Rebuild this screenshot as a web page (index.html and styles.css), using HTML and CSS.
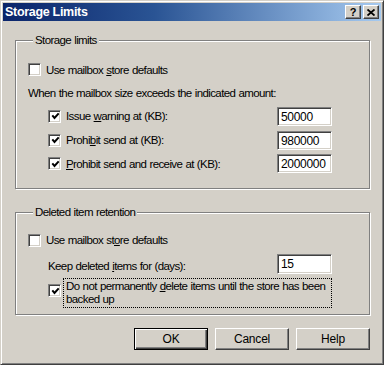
FILE: index.html
```html
<!DOCTYPE html>
<html>
<head>
<meta charset="utf-8">
<link rel="stylesheet" href="styles.css">
</head>
<body>
<div class="window">
  <div class="titlebar">
    <span class="title">Storage Limits</span>
    <div class="tbuttons">
      <span class="tbtn help">?</span>
      <span class="tbtn close"><svg width="8" height="7" viewBox="0 0 8 7"><path d="M0.5 0.5 L7.5 6.5 M7.5 0.5 L0.5 6.5" stroke="#000" stroke-width="1.8" fill="none"/></svg></span>
    </div>
  </div>
  <div class="body">
    <fieldset class="group g1">
      <legend>Storage limits</legend>
      <div class="row r-defaults">
        <span class="cb"></span>
        <span class="lbl">Use mailbox <u>s</u>tore defaults</span>
      </div>
      <div class="row r-when">
        <span class="lbl">When the mailbox size exceeds the indicated amount:</span>
      </div>
      <div class="row r-field">
        <span class="cb checked"><svg width="9" height="9" viewBox="0 0 9 9"><path d="M1.3 3.4 L3.5 5.9 L7.7 1.4" stroke="#000" stroke-width="2" fill="none"/></svg></span>
        <span class="lbl grow">Issue <u>w</u>arning at (KB):</span>
        <span class="input">50000</span>
      </div>
      <div class="row r-field">
        <span class="cb checked"><svg width="9" height="9" viewBox="0 0 9 9"><path d="M1.3 3.4 L3.5 5.9 L7.7 1.4" stroke="#000" stroke-width="2" fill="none"/></svg></span>
        <span class="lbl grow">Prohi<u>b</u>it send at (KB):</span>
        <span class="input">980000</span>
      </div>
      <div class="row r-field">
        <span class="cb checked"><svg width="9" height="9" viewBox="0 0 9 9"><path d="M1.3 3.4 L3.5 5.9 L7.7 1.4" stroke="#000" stroke-width="2" fill="none"/></svg></span>
        <span class="lbl grow"><u>P</u>rohibit send and receive at (KB):</span>
        <span class="input">2000000</span>
      </div>
    </fieldset>
    <fieldset class="group g2">
      <legend>Deleted item retention</legend>
      <div class="row r-defaults2">
        <span class="cb"></span>
        <span class="lbl">Use mailbox st<u>o</u>re defaults</span>
      </div>
      <div class="row r-keep">
        <span class="lbl grow">Keep deleted <u>i</u>tems for (days):</span>
        <span class="input">15</span>
      </div>
      <div class="row r-donot">
        <span class="cb checked"><svg width="9" height="9" viewBox="0 0 9 9"><path d="M1.3 3.4 L3.5 5.9 L7.7 1.4" stroke="#000" stroke-width="2" fill="none"/></svg></span>
        <span class="focus">Do not permanently <u>d</u>elete items until the store has been<br>backed up</span>
      </div>
    </fieldset>
    <div class="buttons">
      <span class="btn default">OK</span>
      <span class="btn">Cancel</span>
      <span class="btn">Help</span>
    </div>
  </div>
</div>
</body>
</html>
```
FILE: styles.css
```css
* { box-sizing: border-box; }
html, body { margin: 0; padding: 0; }
body {
  background: #d4d0c8;
  font-family: "Liberation Sans", Arial, sans-serif;
  font-size: 11.5px;
  letter-spacing: -0.6px;
  word-spacing: 0.5px;
  color: #000;
}
.window {
  width: 384px;
  height: 365px;
  border: 1px solid;
  border-color: #d4d0c8 #404040 #404040 #d4d0c8;
  box-shadow: inset 1px 1px #fff, inset -1px -1px #808080;
  padding: 2px;
  background: #d4d0c8;
}
.titlebar {
  height: 18px;
  background: linear-gradient(to right, #0a246a 0%, #2a5494 40%, #a6caf0 100%);
  display: flex;
  align-items: center;
  justify-content: space-between;
  padding: 0 2px 0 2px;
}
.title {
  color: #fff;
  font-weight: bold;
  font-size: 12.5px;
  letter-spacing: -0.3px;
  word-spacing: 0;
}
.tbuttons { display: flex; gap: 2px; }
.tbtn {
  width: 16px;
  height: 14px;
  background: #d4d0c8;
  border: 1px solid;
  border-color: #fff #404040 #404040 #fff;
  box-shadow: inset -1px -1px #808080;
  display: flex;
  align-items: center;
  justify-content: center;
  font-weight: bold;
  font-size: 11px;
  letter-spacing: 0;
  line-height: 12px;
}
.body {
  padding: 12px 11px 0 12px;
}
.group {
  margin: 0;
  border: 1px solid #808080;
  box-shadow: inset 1px 1px #fff, 1px 1px #fff;
  padding: 0 37px 0 12px;
  min-width: 0;
}
.group legend {
  padding: 0 2px;
  margin-left: 5px;
  line-height: 14px;
  background: #d4d0c8;
}
.g1 { padding-top: 10px; padding-bottom: 13px; }
.g2 { margin-top: 16px; padding-top: 9px; padding-bottom: 6px; }
.row {
  display: flex;
  align-items: center;
}
.r-defaults { height: 24px; padding-top: 1px; }
.r-when { height: 23px; }
.r-field { height: 24px; padding-left: 20px; }
.r-field:last-child { height: 23px; }
.r-defaults2 { height: 24px; }
.r-keep { height: 24px; padding-left: 20px; }
.r-keep .lbl { padding-top: 4px; }
.r-donot { align-items: flex-start; padding-left: 20px; margin-top: 2px; }
.grow { flex: 1; }
.cb {
  width: 13px;
  height: 13px;
  flex: none;
  background: #fff;
  border: 1px solid;
  border-color: #808080 #fff #fff #808080;
  box-shadow: inset 1px 1px #404040, inset -1px -1px #d4d0c8;
  margin-right: 5px;
  display: flex;
  align-items: center;
  justify-content: center;
}
.cb svg { display: block; margin: 1px 0 0 1px; }
.r-donot .cb { margin-top: 6px; margin-right: 2px; }
.lbl { line-height: 14px; white-space: nowrap; }
.input {
  width: 55px;
  height: 19px;
  flex: none;
  background: #fff;
  border: 1px solid;
  border-color: #808080 #fff #fff #808080;
  box-shadow: inset 1px 1px #404040, inset -1px -1px #d4d0c8;
  padding: 2px 2px 0 3px;
  line-height: 15px;
  font-size: 12px;
  letter-spacing: -0.3px;
}
.r-keep .input { height: 20px; }
.focus {
  width: 270px;
  border: 1px dotted #000;
  padding: 1px 2px 0 2px;
  line-height: 13px;
  height: 30px;
  white-space: nowrap;
}
.buttons {
  display: flex;
  justify-content: flex-end;
  gap: 7px;
  margin-top: 13px;
}
.btn {
  width: 74px;
  height: 22px;
  border: 1px solid;
  border-color: #fff #404040 #404040 #fff;
  box-shadow: inset -1px -1px #808080;
  display: flex;
  align-items: center;
  justify-content: center;
  background: #d4d0c8;
  font-size: 12px;
  letter-spacing: -0.2px;
  word-spacing: 0;
}
.btn.default {
  border: 1px solid #000;
  box-shadow: inset 1px 1px #fff, inset -1px -1px #404040, inset -2px -2px #808080;
}
```
